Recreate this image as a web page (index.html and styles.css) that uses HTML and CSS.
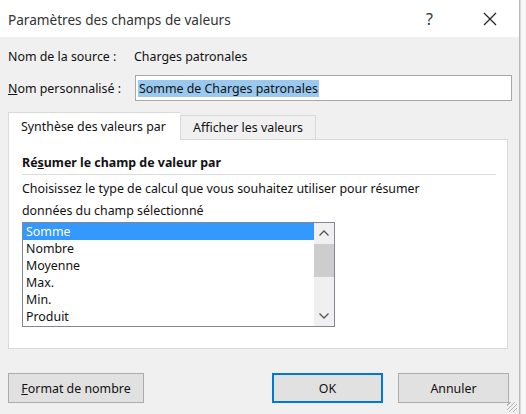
FILE: index.html
```html
<!DOCTYPE html>
<html lang="fr">
<head>
  <meta charset="UTF-8" />
  <title>Paramètres des champs de valeurs</title>
  <link rel="stylesheet" href="styles.css">
</head>
<body>
  <div class="dialog">
    <div class="titlebar">
      <span class="title">Paramètres des champs de valeurs</span>
      <span class="help">?</span>
      <svg class="close" width="14" height="14" viewBox="0 0 14 14">
        <path d="M1 1 L13 13 M13 1 L1 13" stroke="#222" stroke-width="1.2" fill="none" />
      </svg>
    </div>

    <div class="content">
      <div class="row source">
        <span class="label">Nom de la source :</span>
        <span>Charges patronales</span>
      </div>
      <div class="row custom">
        <span class="label"><u>N</u>om personnalisé :</span>
        <div class="input"><span class="sel">Somme de Charges patronales</span></div>
      </div>

      <div class="tabs">
        <div class="tab active">Synthèse des valeurs par</div>
        <div class="tab">Afficher les valeurs</div>
        <div class="tab-fill"></div>
      </div>
      <div class="panel">
        <div class="group-title">Ré<u>s</u>umer le champ de valeur par</div>
        <p class="desc">Choisissez le type de calcul que vous souhaitez utiliser pour résumer<br>données du champ sélectionné</p>
        <div class="listbox">
          <ul class="items">
            <li class="selected">Somme</li>
            <li>Nombre</li>
            <li>Moyenne</li>
            <li>Max.</li>
            <li>Min.</li>
            <li>Produit</li>
          </ul>
          <div class="scrollbar">
            <svg width="12" height="8" viewBox="0 0 12 8"><path d="M1.5 6.5 L6 2 L10.5 6.5" stroke="#555" stroke-width="1.3" fill="none" /></svg>
            <div class="track"><div class="thumb"></div></div>
            <svg width="12" height="8" viewBox="0 0 12 8"><path d="M1.5 1.5 L6 6 L10.5 1.5" stroke="#555" stroke-width="1.3" fill="none" /></svg>
          </div>
        </div>
      </div>

      <div class="buttons">
        <button class="btn number"><u>F</u>ormat de nombre</button>
        <div class="spacer"></div>
        <button class="btn default">OK</button>
        <button class="btn cancel">Annuler</button>
      </div>
    </div>
    <div class="grip"></div>
  </div>
  <div class="behind"></div>
</body>
</html>
```

FILE: styles.css
```css
* {
  box-sizing: border-box;
}
body {
  margin: 0;
  display: flex;
  width: 526px;
  height: 414px;
  overflow: hidden;
  font-family: "Noto Sans", sans-serif;
  font-size: 12.4px;
  color: #111;
  background: #f3f3f3;
}
.dialog {
  position: relative;
  width: 520px;
  height: 414px;
  background: #f0f0f0;
  border-right: 1px solid #b9b9b9;
  flex: none;
}
.behind {
  flex: 1;
  background: #f7f7f7;
  border-left: 1px solid #dadada;
}
.titlebar {
  height: 37px;
  background: #fff;
  display: flex;
  align-items: center;
  padding-left: 8px;
}
.title {
  font-size: 13.6px;
  color: #333;
  flex: 1;
  padding-top: 2px;
}
.help {
  font-size: 16px;
  color: #333;
  margin-right: 50px;
}
.close {
  margin-right: 22px;
}
.content {
  padding-left: 8px;
}
.row {
  display: flex;
  align-items: center;
}
.label {
  width: 126px;
  flex: none;
}
.source {
  height: 38px;
}
.custom {
  height: 26px;
}
.input {
  width: 377px;
  height: 26px;
  background: #fff;
  border: 1px solid #a9a9a9;
  display: flex;
  align-items: center;
  padding-left: 2px;
  margin-left: 1px;
}
.sel {
  background: #99c9ef;
  line-height: 17px;
  padding: 0 1px;
}
.tabs {
  display: flex;
  align-items: flex-end;
  width: 500px;
  margin-top: 11px;
  height: 28px;
}
.tab {
  height: 25px;
  padding: 0 12px;
  border: 1px solid #d9d9d9;
  background: #f0f0f0;
  display: flex;
  align-items: center;
}
.tab.active {
  width: 172px;
  height: 28px;
  padding-bottom: 1px;
  background: #fff;
  border-bottom: none;
  border-right: none;
}
.tab-fill {
  flex: 1;
  border-bottom: 1px solid #d9d9d9;
}
.panel {
  width: 500px;
  height: 209px;
  background: #fff;
  border: 1px solid #d9d9d9;
  border-top: none;
  padding-left: 13px;
}
.group-title {
  font-weight: bold;
  width: 474px;
  height: 35px;
  padding-top: 14px;
  border-bottom: 1px solid #dcdcdc;
}
.desc {
  margin: 3px 0 0;
  line-height: 22px;
}
.listbox {
  display: flex;
  width: 313px;
  height: 105px;
  border: 1px solid #828790;
}
.items {
  list-style: none;
  margin: 0;
  padding: 0;
  flex: 1;
}
.items li {
  height: 17px;
  line-height: 17px;
  padding-left: 3px;
}
.items li.selected {
  background: #3399ff;
  color: #fff;
}
.scrollbar {
  width: 20px;
  background: #f0f0f0;
  display: flex;
  flex-direction: column;
  align-items: center;
}
.scrollbar svg {
  margin: 6px 0;
}
.track {
  flex: 1;
  width: 20px;
}
.thumb {
  height: 33px;
  background: #cdcdcd;
  margin-top: 1px;
}
.buttons {
  display: flex;
  margin-top: 24px;
  padding-right: 10px;
}
.spacer {
  flex: 1;
}
.btn {
  font-family: "Noto Sans", sans-serif;
  font-size: 12.4px;
  color: #111;
  height: 30px;
  background: #e1e1e1;
  border: 1px solid #adadad;
  padding: 0;
}
.btn.number {
  width: 136px;
}
.btn.default {
  width: 111px;
  border: 2px solid #0078d7;
  margin-right: 15px;
}
.btn.cancel {
  width: 111px;
}
.grip {
  position: absolute;
  right: 2px;
  bottom: 2px;
  width: 10px;
  height: 10px;
  background: repeating-linear-gradient(135deg, transparent 0 2px, #b5b5b5 2px 3px);
}
```
